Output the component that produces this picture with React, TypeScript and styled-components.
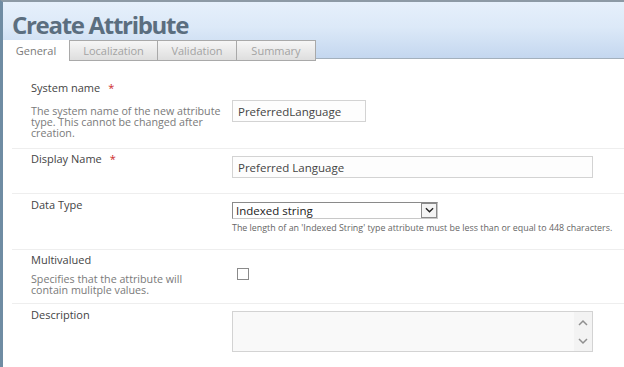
import styled, { createGlobalStyle } from "styled-components";

const GlobalStyle = createGlobalStyle`
  html, body {
    margin: 0;
    padding: 0;
    background: #ffffff;
    overflow: hidden;
  }
  body {
    font-family: "Open Sans", "Noto Sans", sans-serif;
  }
`

const Frame = styled.div`
  width: 624px;
  height: 367px;
  box-sizing: border-box;
  border-left: 3px solid #6f8ca3;
  border-top: 2px solid #8d9aa5;
  background: #ffffff;
  display: flex;
  flex-direction: column;
`

const Header = styled.div`
  background: linear-gradient(to bottom, #e6f0fb 0%, #dce9f8 45%, #c4d7ef 100%);
  border-bottom: 1px solid #a3b0bc;
  height: 57px;
  flex-shrink: 0;
  box-sizing: border-box;
  display: flex;
  flex-direction: column;
  justify-content: space-between;
`

const Title = styled.h1`
  margin: 0;
  padding: 8px 0 0 9px;
  font-size: 24px;
  line-height: 30px;
  font-weight: 700;
  color: #5b6e7f;
  letter-spacing: -1.3px;
`

const TabBar = styled.div`
  display: flex;
  margin-bottom: -1px;
`

const Tab = styled.div<{ $active?: boolean; $width: number }>`
  width: ${p => p.$width}px;
  height: 21px;
  box-sizing: border-box;
  display: flex;
  align-items: center;
  justify-content: center;
  font-size: 11px;
  color: ${p => (p.$active ? "#7a7a7a" : "#a3a3a3")};
  background: ${p => (p.$active ? "#ffffff" : "linear-gradient(to bottom, #f6f6f6, #dedede)")};
  border: ${p => (p.$active ? "none" : "1px solid #a9a9a9")};
  border-left-width: 0;
  border-bottom: ${p => (p.$active ? "1px solid #ffffff" : "1px solid #a9a9a9")};
  &:nth-child(2) {
    border-left: 1px solid #a9a9a9;
  }
`

const Form = styled.div`
  margin-left: 9px;
  display: flex;
  flex-direction: column;
`

const Row = styled.div<{ $height: number }>`
  display: grid;
  grid-template-columns: 201px 1fr;
  height: ${p => p.$height}px;
  box-sizing: border-box;
  padding-left: 19px;
  border-top: 1px solid #eeeeee;
  &:first-child {
    border-top: none;
  }
`

const LabelCol = styled.div<{ $top: number }>`
  padding-top: ${p => p.$top}px;
  display: flex;
  flex-direction: column;
`

const Label = styled.div`
  font-size: 11px;
  line-height: 16px;
  color: #444444;
`

const Required = styled.span`
  color: #cc2a2a;
  margin-left: 8px;
`

const Description = styled.div<{ $gap: number }>`
  margin-top: ${p => p.$gap}px;
  font-size: 10.7px;
  line-height: 11px;
  color: #7a7a7a;
  white-space: nowrap;
`

const ControlCol = styled.div<{ $top: number }>`
  padding-top: ${p => p.$top}px;
  display: flex;
  flex-direction: column;
  align-items: flex-start;
`

const TextBox = styled.div<{ $width: number }>`
  width: ${p => p.$width}px;
  height: 22px;
  box-sizing: border-box;
  border: 1px solid #d3d3d3;
  background: #fdfdfd;
  padding-left: 5px;
  display: flex;
  align-items: center;
  font-size: 11.5px;
  color: #444444;
`

const Select = styled.div`
  width: 206px;
  height: 17px;
  box-sizing: border-box;
  border: 1px solid #8a8a8a;
  border-right-color: #c8c8c8;
  border-bottom-color: #c8c8c8;
  display: flex;
  align-items: stretch;
  background: #ffffff;
`

const SelectValue = styled.div`
  flex: 1;
  padding-left: 3px;
  font-size: 11.5px;
  line-height: 15px;
  color: #222222;
`

const SelectButton = styled.div`
  width: 16px;
  border: 1px solid #8a8a8a;
  box-sizing: border-box;
  background: #f4f4f4;
  display: flex;
  align-items: center;
  justify-content: center;
`

const HelpText = styled.div`
  margin-top: 3px;
  font-size: 8.9px;
  line-height: 12px;
  color: #666666;
  white-space: nowrap;
`

const CheckBox = styled.div`
  width: 12px;
  height: 12px;
  box-sizing: border-box;
  border: 1px solid #8a8a8a;
  background: #ffffff;
  margin-left: 5px;
`

const TextArea = styled.div`
  width: 361px;
  height: 41px;
  box-sizing: border-box;
  border: 1px solid #d3d3d3;
  background: #f9f9f9;
  display: flex;
  justify-content: flex-end;
`

const ScrollBar = styled.div`
  width: 18px;
  display: flex;
  flex-direction: column;
  justify-content: space-between;
  align-items: center;
  padding: 7px 0 6px;
  box-sizing: border-box;
  background: #f3f3f3;
`

const Chevron = ({ up, color = "#8f8f8f", width = 10 }: { up?: boolean; color?: string; width?: number }) => (
  <svg width={width} height={7} viewBox="0 0 10 7">
    <path
      d={up ? "M1 6 L5 2 L9 6" : "M1 1 L5 5 L9 1"}
      fill="none"
      stroke={color}
      strokeWidth={1.5}
    />
  </svg>
)

function App() {
  return (
    <>
      <GlobalStyle />
      <Frame>
        <Header>
          <Title>Create Attribute</Title>
          <TabBar>
            <Tab $active $width={66}>General</Tab>
            <Tab $width={89}>Localization</Tab>
            <Tab $width={79}>Validation</Tab>
            <Tab $width={79}>Summary</Tab>
          </TabBar>
        </Header>
        <Form>
          <Row $height={89}>
            <LabelCol $top={21}>
              <Label>System name<Required>*</Required></Label>
              <Description $gap={10}>
                The system name of the new attribute<br />
                type. This cannot be changed after<br />
                creation.
              </Description>
            </LabelCol>
            <ControlCol $top={41}>
              <TextBox $width={134}>PreferredLanguage</TextBox>
            </ControlCol>
          </Row>
          <Row $height={45}>
            <LabelCol $top={2}>
              <Label>Display Name<Required>*</Required></Label>
            </LabelCol>
            <ControlCol $top={7}>
              <TextBox $width={361}>Preferred Language</TextBox>
            </ControlCol>
          </Row>
          <Row $height={56}>
            <LabelCol $top={3}>
              <Label>Data Type</Label>
            </LabelCol>
            <ControlCol $top={8}>
              <Select>
                <SelectValue>Indexed string</SelectValue>
                <SelectButton>
                  <Chevron color="#222222" width={9} />
                </SelectButton>
              </Select>
              <HelpText>The length of an 'Indexed String' type attribute must be less than or equal to 448 characters.</HelpText>
            </ControlCol>
          </Row>
          <Row $height={54}>
            <LabelCol $top={2}>
              <Label>Multivalued</Label>
              <Description $gap={6}>
                Specifies that the attribute will<br />
                contain mulitple values.
              </Description>
            </LabelCol>
            <ControlCol $top={18}>
              <CheckBox />
            </ControlCol>
          </Row>
          <Row $height={64}>
            <LabelCol $top={3}>
              <Label>Description</Label>
            </LabelCol>
            <ControlCol $top={7}>
              <TextArea>
                <ScrollBar>
                  <Chevron up />
                  <Chevron />
                </ScrollBar>
              </TextArea>
            </ControlCol>
          </Row>
        </Form>
      </Frame>
    </>
  )
}

export default App;
